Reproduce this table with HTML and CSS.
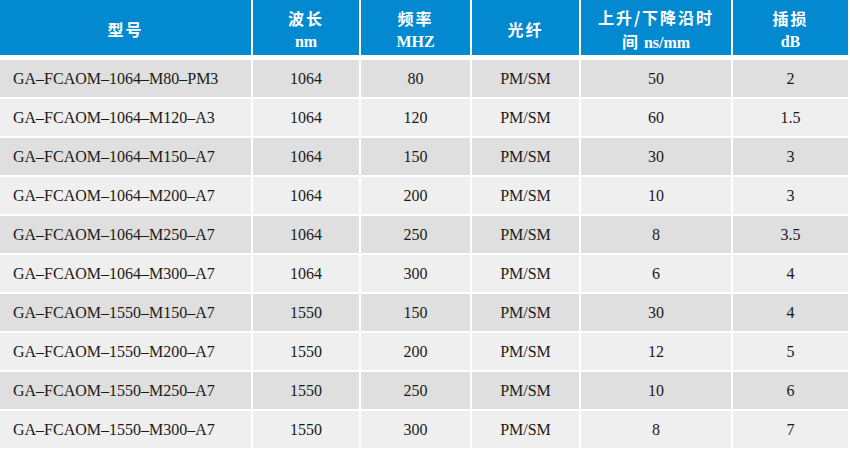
FILE: index.html
```html
<!DOCTYPE html>
<html>
<head>
<meta charset="utf-8">
<link rel="stylesheet" href="styles.css">
</head>
<body>
<div class="table">
  <div class="row head">
    <div class="cell"><span class="cjk">型号</span></div>
    <div class="cell two"><span class="cjk">波长</span><span class="lat">nm</span></div>
    <div class="cell two"><span class="cjk">频率</span><span class="lat">MHZ</span></div>
    <div class="cell"><span class="cjk">光纤</span></div>
    <div class="cell two"><span class="cjk">上升/下降沿时</span><span><span class="cjk">间</span> <span class="lat">ns/mm</span></span></div>
    <div class="cell two"><span class="cjk">插损</span><span class="lat">dB</span></div>
  </div>
  <div class="row odd"><div class="cell">GA–FCAOM–1064–M80–PM3</div><div class="cell">1064</div><div class="cell">80</div><div class="cell">PM/SM</div><div class="cell">50</div><div class="cell">2</div></div>
  <div class="row even"><div class="cell">GA–FCAOM–1064–M120–A3</div><div class="cell">1064</div><div class="cell">120</div><div class="cell">PM/SM</div><div class="cell">60</div><div class="cell">1.5</div></div>
  <div class="row odd"><div class="cell">GA–FCAOM–1064–M150–A7</div><div class="cell">1064</div><div class="cell">150</div><div class="cell">PM/SM</div><div class="cell">30</div><div class="cell">3</div></div>
  <div class="row even"><div class="cell">GA–FCAOM–1064–M200–A7</div><div class="cell">1064</div><div class="cell">200</div><div class="cell">PM/SM</div><div class="cell">10</div><div class="cell">3</div></div>
  <div class="row odd"><div class="cell">GA–FCAOM–1064–M250–A7</div><div class="cell">1064</div><div class="cell">250</div><div class="cell">PM/SM</div><div class="cell">8</div><div class="cell">3.5</div></div>
  <div class="row even"><div class="cell">GA–FCAOM–1064–M300–A7</div><div class="cell">1064</div><div class="cell">300</div><div class="cell">PM/SM</div><div class="cell">6</div><div class="cell">4</div></div>
  <div class="row odd"><div class="cell">GA–FCAOM–1550–M150–A7</div><div class="cell">1550</div><div class="cell">150</div><div class="cell">PM/SM</div><div class="cell">30</div><div class="cell">4</div></div>
  <div class="row even"><div class="cell">GA–FCAOM–1550–M200–A7</div><div class="cell">1550</div><div class="cell">200</div><div class="cell">PM/SM</div><div class="cell">12</div><div class="cell">5</div></div>
  <div class="row odd"><div class="cell">GA–FCAOM–1550–M250–A7</div><div class="cell">1550</div><div class="cell">250</div><div class="cell">PM/SM</div><div class="cell">10</div><div class="cell">6</div></div>
  <div class="row even"><div class="cell">GA–FCAOM–1550–M300–A7</div><div class="cell">1550</div><div class="cell">300</div><div class="cell">PM/SM</div><div class="cell">8</div><div class="cell">7</div></div>
</div>
</body>
</html>
```
FILE: styles.css
```css
html, body {
  margin: 0;
  padding: 0;
  background: #ffffff;
}
.table {
  width: 848px;
  display: flex;
  flex-direction: column;
  gap: 2px;
  font-family: "Liberation Serif", "Times New Roman", "DejaVu Serif", serif;
  font-size: 16px;
  color: #1a1a1a;
}
.row {
  display: grid;
  grid-template-columns: 251px 106px 109px 107px 150px 115px;
  column-gap: 2px;
  height: 37px;
}
.row.head {
  height: 55px;
  margin-bottom: 3px;
}
.cell {
  display: flex;
  align-items: center;
  justify-content: center;
  font-family: "Liberation Serif", "Times New Roman", serif;
}
.row .cell:first-child {
  justify-content: flex-start;
  padding-left: 13px;
}
.row.head .cell:first-child {
  justify-content: center;
  padding-left: 0;
}
.odd .cell { background: #dfdfdf; }
.even .cell { background: #efefef; }
.head .cell {
  background: #0389d0;
  color: #ffffff;
  font-weight: bold;
  padding-top: 2px;
}
.head .cell.two {
  flex-direction: column;
  line-height: 24px;
  padding-top: 4px;
}
.lat {
  font-family: "Liberation Serif", "Times New Roman", serif;
  font-weight: bold;
}
.cjk {
  font-family: "Noto Sans CJK SC", sans-serif;
  font-weight: bold;
  letter-spacing: 2px;
  font-size: 16px;
}
```
